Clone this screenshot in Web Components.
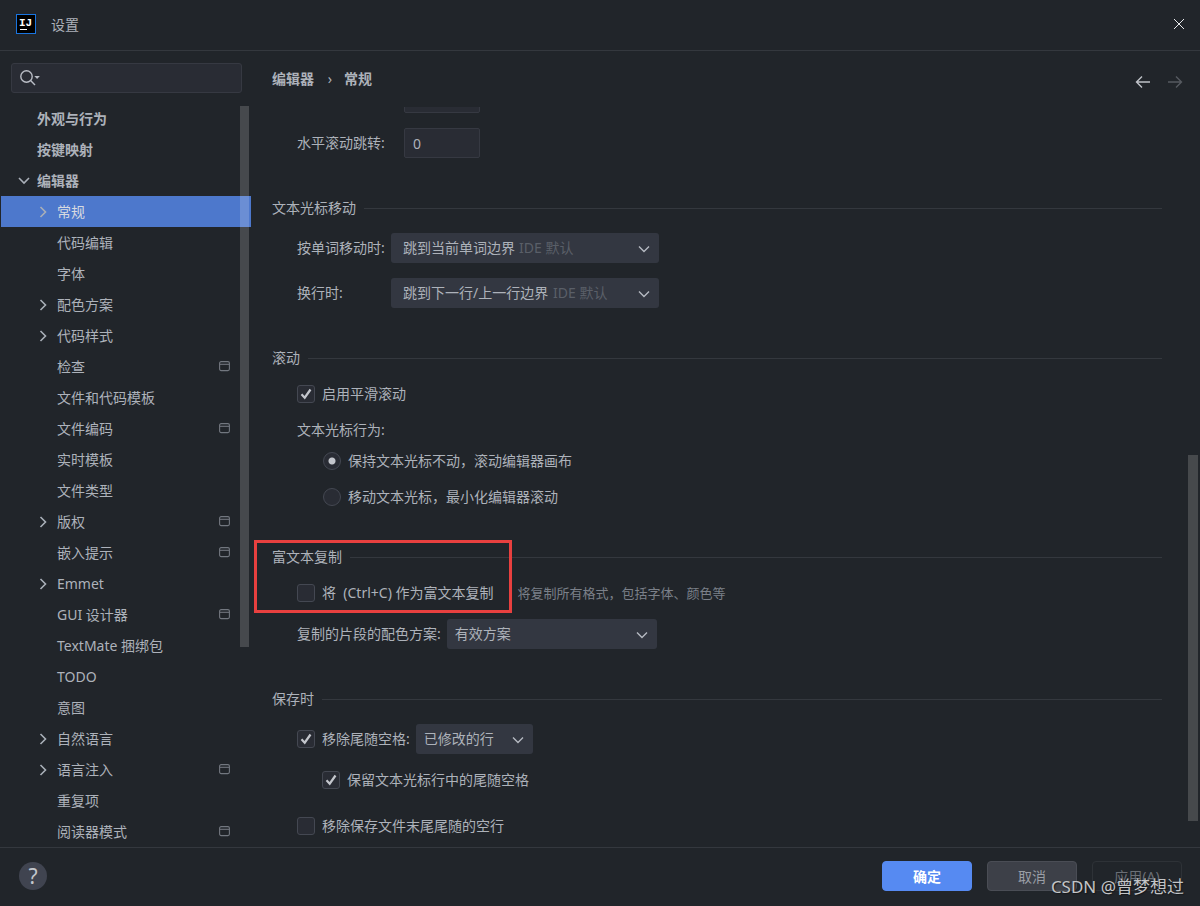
<!DOCTYPE html>
<html lang="zh-CN">
<head>
<meta charset="utf-8">
<title>设置</title>
<style>
  body {
    margin: 0;
    --bg: #21252a;
    --line: #34383e;
    --field: #292c34;
    --field-line: #363942;
    --combo: #333741;
    --text: #adb2ba;
    --muted: #7b8089;
    --faint: #5a5f68;
    --thumb: #46494c;
    background: var(--bg);
    color: var(--text);
    font: 14px/20px "Noto Sans", "Noto Sans CJK SC", sans-serif;
  }
</style>
</head>
<body>
<settings-dialog>
  <title-bar slot="title">设置</title-bar>

  <settings-sidebar slot="side">
    <tree-item level="1" bold>外观与行为</tree-item>
    <tree-item level="1" bold>按键映射</tree-item>
    <tree-item level="1" bold state="open">编辑器</tree-item>
    <tree-item state="closed" selected>常规</tree-item>
    <tree-item>代码编辑</tree-item>
    <tree-item>字体</tree-item>
    <tree-item state="closed">配色方案</tree-item>
    <tree-item state="closed">代码样式</tree-item>
    <tree-item project>检查</tree-item>
    <tree-item>文件和代码模板</tree-item>
    <tree-item project>文件编码</tree-item>
    <tree-item>实时模板</tree-item>
    <tree-item>文件类型</tree-item>
    <tree-item state="closed" project>版权</tree-item>
    <tree-item project>嵌入提示</tree-item>
    <tree-item state="closed">Emmet</tree-item>
    <tree-item project>GUI 设计器</tree-item>
    <tree-item>TextMate 捆绑包</tree-item>
    <tree-item>TODO</tree-item>
    <tree-item>意图</tree-item>
    <tree-item state="closed">自然语言</tree-item>
    <tree-item state="closed" project>语言注入</tree-item>
    <tree-item>重复项</tree-item>
    <tree-item project>阅读器模式</tree-item>
  </settings-sidebar>

  <settings-pane slot="main">
    <number-field label="" value=""></number-field>
    <number-field label="水平滚动跳转:" value="0"></number-field>

    <settings-section heading="文本光标移动">
      <combo-box label="按单词移动时:" value="跳到当前单词边界" hint="IDE 默认" size="large"></combo-box>
      <combo-box label="换行时:" value="跳到下一行/上一行边界" hint="IDE 默认" size="large"></combo-box>
    </settings-section>

    <settings-section heading="滚动" roomy>
      <check-box checked>启用平滑滚动</check-box>
      <radio-group label="文本光标行为:" options="保持文本光标不动，滚动编辑器画布|移动文本光标，最小化编辑器滚动"></radio-group>
    </settings-section>

    <settings-section heading="富文本复制" roomy marked>
      <check-box>将&nbsp; (Ctrl+C) 作为富文本复制<span slot="note">将复制所有格式，包括字体、颜色等</span></check-box>
      <combo-box label="复制的片段的配色方案:" value="有效方案" size="medium"></combo-box>
    </settings-section>

    <settings-section heading="保存时">
      <check-box checked>移除尾随空格:<combo-box slot="control" name="移除尾随空格" value="已修改的行" size="small"></combo-box></check-box>
      <check-box checked nested>保留文本光标行中的尾随空格</check-box>
      <check-box spaced>移除保存文件末尾尾随的空行</check-box>
    </settings-section>
  </settings-pane>

  <dialog-footer slot="footer"></dialog-footer>
</settings-dialog>

<script>
  const define = (name, render) => customElements.define(name, class extends HTMLElement {
    constructor() {
      super();
      this.attachShadow({ mode: "open" });
    }
    connectedCallback() {
      if (!this.shadowRoot.childNodes.length) this.shadowRoot.innerHTML = render(this);
    }
  });
  const attr = (el, name) => el.getAttribute(name) || "";
  const chevronDown = `<svg class="chev" width="12" height="8" viewBox="0 0 12 8" fill="none" stroke="currentColor" stroke-width="1.4" aria-hidden="true"><path d="M1 1.5 6 6.5 11 1.5"/></svg>`;

  /* Window frame: title bar, two columns, footer */
  define("settings-dialog", () => `
    <style>
      :host { display: grid; grid-template-rows: auto 1fr auto; min-height: 100vh; position: relative; overflow: hidden; }
      .body { display: grid; grid-template-columns: 251px minmax(0, 1fr); }
      .mark { position: absolute; right: 16px; bottom: 7px; font: 17px/24px "Noto Sans", "Noto Sans CJK SC", sans-serif; color: #c3c5c7; text-shadow: 1px 1px 1px #16181b; pointer-events: none; }
    </style>
    <slot name="title"></slot>
    <div class="body"><slot name="side"></slot><slot name="main"></slot></div>
    <slot name="footer"></slot>
    <div class="mark">CSDN @曾梦想过</div>`);

  define("title-bar", () => `
    <style>
      :host { display: flex; align-items: center; gap: 15px; height: 50px; padding: 0 15px 0 16px; border-bottom: 1px solid var(--line); }
      .logo { box-sizing: border-box; width: 20px; height: 20px; margin-bottom: 2px; border: 1px solid #1a75e0; background: #000; color: #fff; font: bold 11px/10px "Liberation Mono", monospace; padding: 3px 0 0 2px; }
      .logo::after { content: ""; display: block; width: 7px; height: 1px; margin: 1px 0 0 1px; background: #fff; }
      .name { flex: 1; }
      button { display: flex; padding: 0; border: 0; background: none; color: #e8eaec; margin-bottom: 2px; }
    </style>
    <div class="logo">IJ</div>
    <div class="name"><slot></slot></div>
    <button aria-label="关闭"><svg width="12" height="12" viewBox="0 0 12 12" stroke="currentColor" stroke-width="1"><path d="M1 1 11 11M11 1 1 11"/></svg></button>`);

  define("settings-sidebar", () => `
    <style>
      :host { display: block; position: relative; padding-top: 12px; }
      .search { display: flex; align-items: center; box-sizing: border-box; height: 30px; margin: 0 9px 10px 11px; padding-left: 8px; gap: 4px; background: var(--field); border: 1px solid var(--field-line); border-radius: 3px; }
      .search svg { flex: none; }
      input { flex: 1; min-width: 0; border: 0; padding: 0; outline: 0; background: none; color: inherit; font: inherit; }
      nav { display: block; }
      .thumb { position: absolute; z-index: 1; top: 55px; right: 2px; width: 9px; height: 68%; background: rgba(255, 255, 255, 0.17); }
    </style>
    <div class="search">
      <svg width="21" height="18" viewBox="0 0 21 18" fill="none" stroke="#b9bdc5" stroke-width="1.4" aria-hidden="true"><circle cx="6.5" cy="7.5" r="5.7"/><path d="M10.6 11.6 15 16"/><path d="M14.3 7h5.600L17.100 10z" fill="#b9bdc5" stroke="none"/></svg>
      <input type="text" aria-label="搜索">
    </div>
    <nav><slot></slot></nav>
    <div class="thumb"></div>`);

  define("tree-item", el => {
    const arrows = {
      open: `<svg width="12" height="12" viewBox="0 0 12 12"><path d="M2 3 7 8 12 3"/></svg>`,
      closed: `<svg width="12" height="12" viewBox="0 0 12 12"><path d="M3.500 1 8.500 6 3.500 11"/></svg>`
    };
    return `
    <style>
      :host { display: block; }
      a { display: grid; grid-template-columns: 12px 1fr auto; column-gap: 8px; align-items: center; height: 31px; margin-left: 1px; padding: 0 21px 0 36px; color: inherit; text-decoration: none; }
      :host([level="1"]) a { padding-left: 16px; }
      :host([bold]) a { font-weight: 700; }
      :host([selected]) a { background: #4d78cc; color: #d7dae0; }
      svg { display: block; fill: none; stroke: #a9afb8; stroke-width: 1.6; overflow: visible; }
      .project { stroke: #72777f; stroke-width: 1.1; }
    </style>
    <a href="#"><span>${arrows[attr(el, "state")] || ""}</span><slot></slot>${el.hasAttribute("project") ? `<svg class="project" width="11" height="12" viewBox="0 0 11 12" aria-hidden="true"><rect x=".6" y=".6" width="9.8" height="9" rx="1.5"/><path d="M.6 3.300h9.800"/></svg>` : ""}</a>`;
  });

  define("settings-pane", () => `
    <style>
      :host { display: flex; flex-direction: column; position: relative; }
      header { display: flex; align-items: center; height: 56px; padding: 0 17px 0 21px; }
      ol { display: flex; flex: 1; margin: 0; padding: 0; list-style: none; font-weight: 700; }
      li + li::before { content: "›"; display: inline-block; width: 30px; text-align: center; font-weight: 400; text-indent: 2px; }
      button { display: flex; padding: 0; margin: 6px 0 0 16px; border: 0; background: none; color: #bfc2c8; }
      button:disabled { color: #565a60; }
      svg { fill: none; stroke: currentColor; stroke-width: 1.4; }
      .view { flex: 1; overflow: hidden; padding: 0 38px 10px 21px; }
      .scrolled { display: flex; flex-direction: column; gap: 15px; margin-top: -24px; }
      .thumb { position: absolute; top: 404px; right: 2px; width: 10px; height: 46%; background: var(--thumb); }
    </style>
    <header>
      <ol><li>编辑器</li><li>常规</li></ol>
      <button aria-label="后退"><svg width="16" height="14" viewBox="0 0 16 14"><path d="M15 7H1.500M7 1.500 1.500 7 7 12.500"/></svg></button>
      <button aria-label="前进" disabled><svg width="16" height="14" viewBox="0 0 16 14"><path d="M1 7H14.500M9 1.500 14.500 7 9 12.500"/></svg></button>
    </header>
    <div class="view"><div class="scrolled"><slot></slot></div></div>
    <div class="thumb"></div>`);

  define("settings-section", el => `
    <style>
      :host { display: flex; flex-direction: column; position: relative; gap: 15px; margin-top: 25px; }
      :host([roomy]) { gap: 16px; }
      h2 { display: flex; align-items: center; gap: 8px; margin: 0; font: inherit; }
      h2::after { content: ""; flex: 1; height: 1px; background: var(--line); }
      .frame { position: absolute; left: -18px; top: -7px; box-sizing: border-box; width: 258px; height: 73px; border: 3px solid #e8403f; pointer-events: none; }
    </style>
    <h2>${attr(el, "heading")}</h2>
    <slot></slot>
    ${el.hasAttribute("marked") ? `<div class="frame"></div>` : ""}`);

  define("number-field", el => `
    <style>
      :host { display: flex; align-items: center; height: 30px; padding-left: 25px; }
      label { width: 107px; }
      input { box-sizing: border-box; width: 76px; height: 30px; padding: 0 8px; background: var(--field); border: 1px solid var(--field-line); border-radius: 2px; color: inherit; font: inherit; outline: 0; }
    </style>
    <label for="n">${attr(el, "label")}</label><input id="n" type="text" value="${attr(el, "value")}">`);

  define("combo-box", el => `
    <style>
      :host { display: flex; align-items: center; gap: 6px; padding-left: 25px; }
      :host([slot]) { padding-left: 0; }
      label { min-width: 88px; }
      .box { display: flex; align-items: center; box-sizing: border-box; position: relative; height: 30px; padding-left: 8px; background: var(--combo); border-radius: 3px; }
      :host([size="large"]) .box { width: 268px; padding-left: 12px; }
      :host([size="medium"]) .box { width: 210px; }
      :host([size="small"]) .box { width: 117px; }
      select { appearance: none; flex: none; height: 30px; margin: 0; padding: 0; border: 0; outline: 0; background: none; color: inherit; font: inherit; }
      .hint { margin-left: 4px; color: var(--faint); pointer-events: none; }
      .chev { position: absolute; right: 9px; top: 12px; color: #b5b9c1; pointer-events: none; }
    </style>
    ${el.hasAttribute("label") ? `<label for="s">${attr(el, "label")}</label>` : ""}
    <div class="box"><select id="s" ${el.hasAttribute("name") ? `aria-label="${attr(el, "name")}"` : ""}><option>${attr(el, "value")}</option></select>${el.hasAttribute("hint") ? `<span class="hint">${attr(el, "hint")}</span>` : ""}${chevronDown}</div>`);

  define("check-box", el => `
    <style>
      :host { display: flex; align-items: center; padding-left: 25px; }
      :host([nested]) { padding-left: 50px; margin-top: 1px; }
      :host([spaced]) { margin-top: 11px; }
      label { display: flex; align-items: center; gap: 7px; white-space: pre; }
      .tick { display: grid; }
      .tick > * { grid-area: 1 / 1; }
      input { appearance: none; box-sizing: border-box; width: 18px; height: 18px; margin: 0; background: var(--field); border: 1px solid #444852; border-radius: 3px; }
      svg { visibility: hidden; fill: none; stroke: #c3c6cc; stroke-width: 2.2; pointer-events: none; }
      input:checked + svg { visibility: visible; }
      ::slotted([slot="note"]) { margin-left: 24px; font-size: 13px; color: var(--muted); }
      ::slotted([slot="control"]) { margin-left: 6px; }
    </style>
    <label><span class="tick"><input type="checkbox" ${el.hasAttribute("checked") ? "checked" : ""}><svg width="18" height="18" viewBox="0 0 18 18"><path d="M4.500 9.300 7.700 12.700 13.500 4.500"/></svg></span><span><slot></slot></span></label>
    <slot name="note"></slot><slot name="control"></slot>`);

  define("radio-group", el => `
    <style>
      :host { display: block; padding-left: 25px; }
      fieldset { display: flex; flex-direction: column; gap: 16px; margin: 0; border: 0; padding: 0 0 0 26px; }
      legend { margin: 0 0 11px -26px; padding: 0; }
      label { display: flex; align-items: center; gap: 7px; height: 20px; }
      input { appearance: none; box-sizing: border-box; width: 18px; height: 18px; margin: 0; background: var(--field); border: 1px solid #444852; border-radius: 50%; }
      input:checked { background: radial-gradient(circle, #c3c6cc 3px, var(--field) 4px); }
    </style>
    <fieldset>
      <legend>${attr(el, "label")}</legend>
      ${attr(el, "options").split("|").map((text, i) => `<label><input type="radio" name="caret" ${i === 0 ? "checked" : ""}>${text}</label>`).join("")}
    </fieldset>`);

  define("dialog-footer", () => `
    <style>
      :host { display: flex; align-items: center; gap: 15px; height: 56px; padding: 0 18px 2px 19px; border-top: 1px solid var(--line); }
      button { box-sizing: border-box; width: 90px; height: 30px; margin: 0; padding: 2px 0 0; border: 1px solid #4a4d55; border-radius: 4px; background: #3d4048; color: #9a9ea6; font: inherit; }
      .help { width: 28px; height: 28px; margin-right: auto; padding: 0; border: 0; border-radius: 50%; background: #404450; color: #c3c6cc; font-size: 21px; line-height: 28px; }
      .ok { background: #568af2; border-color: #568af2; color: #fff; font-weight: 700; }
      .apply { background: none; border-color: #2e3237; color: #6b6f76; }
    </style>
    <button class="help" aria-label="帮助">?</button>
    <button class="ok">确定</button>
    <button class="cancel">取消</button>
    <button class="apply" disabled>应用(A)</button>`);
</script>
</body>
</html>
